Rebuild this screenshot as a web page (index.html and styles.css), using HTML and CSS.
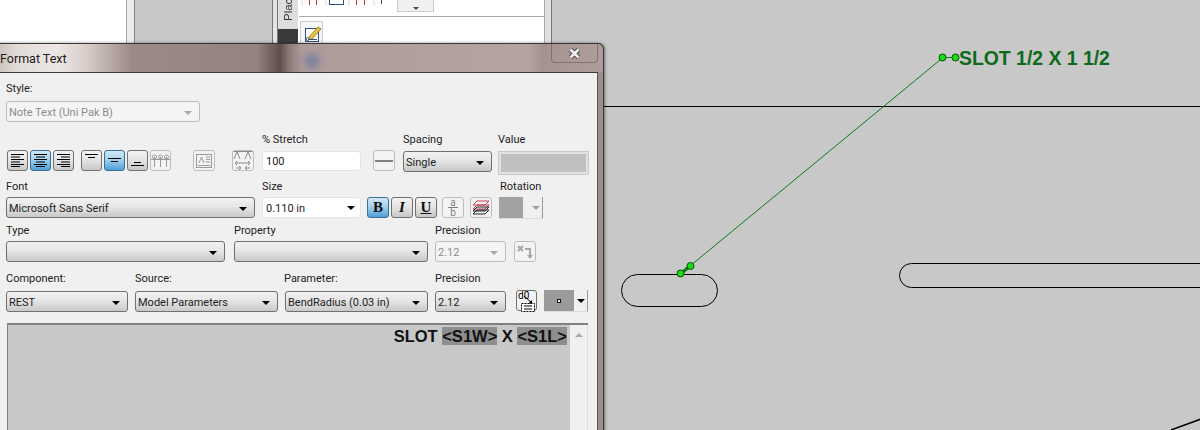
FILE: index.html
```html
<!DOCTYPE html>
<html>
<head>
    <meta charset="utf-8">
    <title>Format Text</title>
    <link rel="stylesheet" href="styles.css">
</head>
<body>
    <div class="canvas">
        <!-- windows behind the dialog -->
        <div class="back_panel"></div>

        <div class="place_window">
            <div class="place_tab">
                <span class="place_tab_text">Plac</span>
                <div class="place_tab_dark"></div>
            </div>
            <div class="place_body">
                <div class="place_icons">
                    <svg class="place_icons_svg" width="96" height="6" viewBox="0 0 96 6">
                        <path d="M10.500 0v5M17.500 0v5M57.500 0v5M65.500 0v5" stroke="#c0392b" fill="none"/>
                        <path d="M30 4.500h15M30.500 0v5M44.500 0v5M82.500 0v4" stroke="#2f4f80" fill="none"/>
                        <path d="M3 0v6M27 0v6M50 0v6M75 0v6" stroke="#d8d8d8" fill="none"/>
                    </svg>
                    <div class="place_more"><i class="tiny_arrow"></i></div>
                </div>
                <div class="place_pencil">
                    <svg width="18" height="18" viewBox="0 0 18 18">
                        <rect x="1.500" y="4.500" width="13" height="13" fill="#fff" stroke="#2f4f80"/>
                        <path d="M5 13l9-10 3 2-9 10-3.500 1z" fill="#f0c040" stroke="#8a6a10" stroke-width=".8"/>
                        <path d="M3 15.500h10" stroke="#2f4f80"/>
                        <circle cx="3.500" cy="15" r="1.500" fill="#fff" stroke="#2f4f80"/>
                    </svg>
                </div>
            </div>
        </div>

        <!-- the drawing on the sheet -->
        <svg class="sheet" width="1200" height="430" viewBox="0 0 1200 430">
            <path d="M600 106.500H1200" stroke="#000" fill="none"/>
            <rect x="621.500" y="274.500" width="96" height="32" rx="16" fill="none" stroke="#000"/>
            <rect x="899.500" y="263.500" width="340" height="24" rx="12" fill="none" stroke="#000"/>
            <path d="M1171 430l30-11" stroke="#000" stroke-width="1.500" fill="none"/>
            <path d="M943 57.500L690 266M943 57.500H956" stroke="#0d7a1c" fill="none"/>
            <path d="M681 273.500L690 266" stroke="#0d7a1c" stroke-width="3" fill="none"/>
            <g fill="#14e014" stroke="#0a4d0a">
                <circle cx="942.500" cy="57.500" r="3.500"/>
                <circle cx="955.500" cy="57.500" r="3.500"/>
                <circle cx="690.500" cy="266" r="3.500"/>
                <circle cx="680.500" cy="273.500" r="3.500"/>
            </g>
        </svg>
        <div class="sheet_note">SLOT 1/2 X 1 1/2</div>

        <!-- dialog -->
        <div class="dialog">
            <div class="title_bar">
                <span class="title_text">Format Text</span>
                <div class="title_blue"></div>
                <div class="close_btn">
                    <svg width="13" height="11" viewBox="0 0 13 11">
                        <path d="M2.500 1.500l8 8M10.500 1.500l-8 8" stroke="#4a4a4a" stroke-width="4.600" fill="none"/>
                        <path d="M2.500 1.500l8 8M10.500 1.500l-8 8" stroke="#f4f4f4" stroke-width="2.600" fill="none"/>
                    </svg>
                </div>
            </div>
            <div class="dialog_body">
                <div class="label_row row_style"><span>Style:</span></div>
                <div class="style_row">
                    <div class="combo disabled"><span>Note Text (Uni Pak B)</span><i class="arrow"></i></div>
                </div>

                <div class="label_row row_stretch">
                    <span>% Stretch</span><span>Spacing</span><span>Value</span>
                </div>
                <div class="tool_row">
                    <div class="btn_group">
                        <div class="tbtn"><svg width="15" height="13" viewBox="0 0 15 13"><path d="M1 .5h13M1 3h9M1 5.500h13M1 8h9M1 10.500h13M1 12.500h9" stroke="#000" fill="none"/></svg></div>
                        <div class="tbtn active"><svg width="15" height="13" viewBox="0 0 15 13"><path d="M1 .5h13M3 3h9M1 5.500h13M3 8h9M1 10.500h13M3 12.500h9" stroke="#000" fill="none"/></svg></div>
                        <div class="tbtn"><svg width="15" height="13" viewBox="0 0 15 13"><path d="M1 .5h13M5 3h9M1 5.500h13M5 8h9M1 10.500h13M5 12.500h9" stroke="#000" fill="none"/></svg></div>
                    </div>
                    <div class="btn_group vert_group">
                        <div class="tbtn align_top"><svg width="13" height="5" viewBox="0 0 13 5"><path d="M0 .5h13M3 3.500h7" stroke="#000" fill="none"/></svg></div>
                        <div class="tbtn active"><svg width="13" height="5" viewBox="0 0 13 5"><path d="M0 .5h13M3 3.500h7" stroke="#000" fill="none"/></svg></div>
                        <div class="tbtn align_bottom"><svg width="13" height="5" viewBox="0 0 13 5"><path d="M3 .5h7M0 3.500h13" stroke="#000" fill="none"/></svg></div>
                        <div class="tbtn off"><svg width="19" height="14" viewBox="0 0 19 14"><path d="M0 5.500h19M3.500 3v10M9.500 3v10M15.500 3v10" stroke="#999" fill="none"/><circle cx="3.500" cy="3" r="2" fill="none" stroke="#999"/><circle cx="9.500" cy="3" r="2" fill="none" stroke="#999"/><circle cx="15.500" cy="3" r="2" fill="none" stroke="#999"/></svg></div>
                    </div>
                    <div class="tbtn off box_one"><svg width="16" height="14" viewBox="0 0 16 14"><rect x=".5" y=".5" width="15" height="13" fill="none" stroke="#999"/><path d="M3 9l2.500-6L8 9M2 11.500h12M10 3h4M10 5.500h4M10 8h4" stroke="#999" fill="none"/></svg></div>
                    <div class="tbtn off box_two"><svg width="20" height="19" viewBox="0 0 20 19"><path d="M1 8l3-7 3 7M12 8l3-7 3 7M2 12h15M2 12l2-2M2 12l2 2M17 12l-2-2M17 12l-2 2M3 17h5M8 17l-2-2M8 17l-2 2M17 17h-5M12 17l2-2M12 17l2 2M.5.500h19" stroke="#8c8c8c" fill="none"/></svg></div>
                    <div class="text_input stretch_input">100</div>
                    <div class="tbtn off line_btn"><i class="line_mark"></i></div>
                    <div class="combo spacing_combo"><span>Single</span><i class="arrow"></i></div>
                    <div class="value_box"></div>
                </div>

                <div class="label_row row_font">
                    <span>Font</span><span>Size</span><span>Rotation</span>
                </div>
                <div class="font_row">
                    <div class="combo font_combo"><span>Microsoft Sans Serif</span><i class="arrow"></i></div>
                    <div class="text_input size_input"><span>0.110 in</span><i class="arrow"></i></div>
                    <div class="style_btns">
                        <div class="tbtn active letter letter_b">B</div>
                        <div class="tbtn letter letter_i">I</div>
                        <div class="tbtn letter letter_u">U</div>
                    </div>
                    <div class="tbtn off frac_btn">
                        <span>a</span><span class="frac_low">b</span>
                    </div>
                    <div class="tbtn off layer_btn">
                        <svg width="18" height="15" viewBox="0 0 18 15"><path d="M5 1h12l-4 4H1zM5 5h12l-4 4H1z" fill="none" stroke="#c0404a"/><path d="M5 7h12l-4 4H1zM5 10h12l-4 4H1z" fill="none" stroke="#222"/></svg>
                    </div>
                    <div class="swatch_combo rotation_combo"><div class="swatch"></div><i class="arrow grey"></i></div>
                </div>

                <div class="label_row row_type">
                    <span>Type</span><span>Property</span><span>Precision</span>
                </div>
                <div class="type_row">
                    <div class="combo"><span></span><i class="arrow"></i></div>
                    <div class="combo"><span></span><i class="arrow"></i></div>
                    <div class="combo disabled"><span>2.12</span><i class="arrow"></i></div>
                    <div class="tbtn off xy_btn">
                        <svg width="18" height="16" viewBox="0 0 18 16"><path d="M2 2l5 5M7 2l-5 5M9 5h5v7" stroke="#a8a8a8" stroke-width="2" fill="none"/><path d="M11 11h6l-3 4z" fill="#a8a8a8"/></svg>
                    </div>
                </div>

                <div class="label_row row_component">
                    <span>Component:</span><span>Source:</span><span>Parameter:</span><span>Precision</span>
                </div>
                <div class="component_row">
                    <div class="combo"><span>REST</span><i class="arrow"></i></div>
                    <div class="combo"><span>Model Parameters</span><i class="arrow"></i></div>
                    <div class="combo"><span>BendRadius (0.03 in)</span><i class="arrow"></i></div>
                    <div class="combo"><span>2.12</span><i class="arrow"></i></div>
                    <div class="tbtn d0_btn">
                        <span class="d0_text">d0</span>
                        <svg class="d0_svg" width="20" height="20" viewBox="0 0 20 20"><path d="M6 4l8 7" stroke="#000" fill="none"/><path d="M14 8v5h-5z" fill="#000"/><rect x="3.500" y="11.500" width="13" height="8" fill="#fff" stroke="#000" stroke-dasharray="2 1"/><path d="M6 14h8M6 17h8" stroke="#000" fill="none"/></svg>
                    </div>
                    <div class="swatch_combo dot_combo"><div class="swatch"><i class="dot"></i></div><i class="arrow"></i></div>
                </div>

                <div class="editor">
                    <div class="editor_text">
                        SLOT <span class="param">&lt;S1W&gt;</span> X <span class="param">&lt;S1L&gt;</span>
                    </div>
                    <div class="scrollbar"><i class="scroll_up"></i></div>
                </div>
            </div>
        </div>
    </div>
</body>
</html>
```

FILE: styles.css
```css
html, body {
    margin: 0;
    height: 100%;
    overflow: hidden;
}

body {
    font-family: Roboto, 'Liberation Sans', sans-serif;
    font-size: 11px;
    color: #222;
    background: #c8c8c8;
}

.canvas {
    position: relative;
    width: 1200px;
    height: 430px;
    overflow: hidden;
}

/* windows behind */

.back_panel {
    position: absolute;
    left: 0;
    top: 0;
    width: 126px;
    height: 43px;
    background: #fff;
    border-right: 1px solid #a8a8a8;
    box-shadow: 7px 0 0 #ececec, 8px 0 0 #858585;
}

.place_window {
    position: absolute;
    left: 272px;
    top: 0;
    width: 267px;
    height: 44px;
    display: flex;
    border-left: 1px solid #777;
    border-right: 1px solid #aaa;
    box-shadow: 6px 0 0 #e4e0e0, 7px 0 0 #777;
    padding-left: 4px;
    background: #e6e2e2;
}

.place_tab {
    width: 20px;
    border-left: 1px solid #777;
    background: #dedede;
    display: flex;
    flex-direction: column;
    align-items: center;
    overflow: hidden;
}

.place_tab_text {
    writing-mode: vertical-rl;
    transform: rotate(180deg);
    height: 29px;
    box-sizing: border-box;
    padding-top: 8px;
    font-family: 'Liberation Sans', sans-serif;
    font-size: 11.5px;
    color: #333;
    white-space: nowrap;
    display: block;
    text-align: left;
}

.place_tab_dark {
    width: 100%;
    height: 15px;
    background: #3a3a3a;
}

.place_body {
    flex: 1;
    background: #fff;
    padding-left: 1px;
}

.place_icons {
    height: 16px;
    border-bottom: 1px solid #aaa;
    display: flex;
}

.place_icons_svg {
    display: block;
}

.place_more {
    width: 37px;
    height: 12px;
    margin-left: 2px;
    background: #f0f0f0;
    border: 1px solid #ccc;
    border-top: 0;
    display: flex;
    justify-content: center;
    align-items: flex-end;
    padding-bottom: 1px;
    box-sizing: border-box;
}

.tiny_arrow {
    border-left: 3px solid transparent;
    border-right: 3px solid transparent;
    border-top: 3px solid #444;
}

.place_pencil {
    width: 23px;
    height: 24px;
    margin-top: 4px;
    margin-left: 1px;
    box-sizing: border-box;
    border: 1px solid #ccc;
    background: #f6f6f6;
    padding: 2px 0 0 3px;
}

.place_pencil svg {
    display: block;
}

/* sheet */

.sheet {
    position: absolute;
    left: 0;
    top: 0;
}

.sheet_note {
    position: absolute;
    left: 959px;
    top: 47px;
    font-family: 'Liberation Sans', Arial, sans-serif;
    font-size: 19.4px;
    line-height: 22px;
    font-weight: 700;
    color: #0d6a1a;
    white-space: nowrap;
}

/* dialog */

.dialog {
    position: absolute;
    left: -3px;
    top: 43px;
    width: 607px;
    height: 400px;
    box-sizing: border-box;
    border: 1px solid #3c3434;
    border-left: 0;
    border-radius: 0 6px 0 0;
    background: #9c8e8c;
    box-shadow: 1px 0 3px rgba(0, 0, 0, 0.45);
}

.title_bar {
    position: relative;
    height: 28px;
    background: linear-gradient(90deg, #cbbfbb 0, #e2dcd9 20px, #ece7e5 60px, #d8ccc9 90px, #9c8a88 135px, #958381 260px, #5f4e4e 283px, #8a7876 292px, #ad9c99 305px, #b5a5a2 530px, #a69391 545px, #ad9d9a 600px);
    border-radius: 0 6px 0 0;
}

.title_text {
    position: absolute;
    left: 3px;
    top: 7px;
    font-size: 12.5px;
    line-height: 15px;
    color: #1c1c1c;
}

.title_blue {
    position: absolute;
    left: 308px;
    top: 10px;
    width: 14px;
    height: 14px;
    border-radius: 7px;
    background: #6f7ba0;
    filter: blur(4px);
}

.close_btn {
    position: absolute;
    left: 554px;
    top: 0;
    width: 47px;
    height: 19px;
    box-sizing: border-box;
    border: 1px solid #83736f;
    border-top: 0;
    border-radius: 0 0 4px 4px;
    display: flex;
    align-items: center;
    justify-content: center;
}

.close_btn svg {
    overflow: visible;
}

.dialog_body {
    width: 601px;
    height: 370px;
    box-sizing: border-box;
    background: #f0f0f0;
    border-top: 1px solid #3f3636;
    border-right: 1px solid #5d5050;
    padding-left: 9px;
}

.label_row {
    display: grid;
    height: 13px;
    line-height: 13px;
    white-space: nowrap;
}

.row_style {
    padding-top: 9px;
}

.row_stretch {
    margin-top: 11px;
    margin-left: 256px;
    grid-template-columns: 141px 95px 1fr;
}

.row_font {
    margin-top: 6px;
    grid-template-columns: 256px 238px 1fr;
}

.row_type {
    margin-top: 5px;
    grid-template-columns: 228px 201px 1fr;
}

.row_component {
    margin-top: 10px;
    grid-template-columns: 129px 149px 151px 1fr;
}

/* controls */

.combo,
.text_input {
    height: 21px;
    box-sizing: border-box;
    border: 1px solid #707070;
    border-radius: 3px;
    display: flex;
    align-items: center;
    justify-content: space-between;
    padding: 2px 4px 0 2px;
    white-space: nowrap;
    overflow: hidden;
}

.combo {
    background: linear-gradient(#f2f2f2 0, #e6e6e6 45%, #c9c9c9 100%);
}

.combo.disabled {
    background: #f4f4f4;
    border-color: #bcbcbc;
    color: #8c8c8c;
}

.combo.disabled .arrow {
    border-top-color: #a8a8a8;
}

.arrow {
    flex: none;
    margin-right: 3px;
    border-left: 4px solid transparent;
    border-right: 4px solid transparent;
    border-top: 4px solid #000;
}

.arrow.grey {
    border-top-color: #a0a0a0;
}

.text_input {
    background: #fff;
    border: 1px solid #e4e4e4;
    padding: 1px 2px 0 3px;
}

.tbtn {
    width: 21px;
    height: 21px;
    box-sizing: border-box;
    border: 1px solid #707070;
    border-radius: 3px;
    background: linear-gradient(#f4f4f4 0, #e4e4e4 45%, #c8c8c8 100%);
    display: flex;
    align-items: center;
    justify-content: center;
    flex: none;
}

.tbtn.active {
    border-color: #3c6f92;
    background: linear-gradient(#d2e8f6 0, #a4d2ee 45%, #4f9fd6 100%);
}

.tbtn.off {
    background: #f3f3f3;
    border-color: #bdbdbd;
}

.style_row {
    margin-top: 6px;
    width: 194px;
}

.tool_row {
    display: flex;
    margin-top: 4px;
    align-items: flex-start;
}

.btn_group {
    display: flex;
    gap: 2px;
    margin-left: 1px;
}

.vert_group {
    margin-left: 7px;
}

.align_top {
    align-items: flex-start;
    padding-top: 3px;
}

.align_bottom {
    align-items: flex-end;
    padding-bottom: 3px;
}

.box_one {
    margin-left: 22px;
    width: 22px;
}

.box_two {
    margin-left: 17px;
    width: 22px;
    border-color: #c8c8c8;
}

.stretch_input {
    width: 99px;
    margin-left: 8px;
    margin-top: 1px;
    height: 20px;
}

.line_btn {
    width: 22px;
    margin-left: 12px;
}

.line_mark {
    width: 18px;
    height: 2px;
    background: #808080;
}

.spacing_combo {
    width: 89px;
    margin-left: 8px;
    margin-top: 1px;
}

.value_box {
    width: 89px;
    height: 22px;
    box-sizing: border-box;
    margin-left: 7px;
    margin-top: 2px;
    background: #c0c0c0;
    border: 2px solid #e2e2e2;
    outline: 1px solid #c8c8c8;
}

.font_row {
    display: flex;
    margin-top: 4px;
    align-items: flex-start;
}

.font_combo {
    width: 249px;
}

.size_input {
    width: 99px;
    margin-left: 7px;
}

.style_btns {
    display: flex;
    gap: 2px;
    margin-left: 6px;
}

.letter {
    width: 22px;
    height: 21px;
    font-family: 'Liberation Serif', 'Times New Roman', serif;
    font-size: 15px;
    font-weight: 700;
    color: #111;
}

.letter_i {
    font-style: italic;
}

.letter_u {
    text-decoration: underline;
}

.frac_btn {
    width: 22px;
    margin-left: 5px;
    flex-direction: column;
    font-size: 10px;
    line-height: 9px;
    color: #808080;
}

.frac_low {
    border-top: 1px solid #808080;
    width: 10px;
    text-align: center;
}

.layer_btn {
    width: 22px;
    margin-left: 6px;
    background: #f0f0f0;
    border-color: #d0d0d0;
}

.swatch_combo {
    width: 44px;
    height: 22px;
    display: flex;
    align-items: center;
    justify-content: space-between;
    box-sizing: border-box;
    background: #f0f0f0;
    border-right: 1px solid #9a9a9a;
    border-bottom: 1px solid #dcdcdc;
}

.swatch_combo .arrow {
    margin-right: 2px;
}

.swatch {
    width: 24px;
    height: 100%;
    background: #a2a2a2;
}

.rotation_combo {
    margin-left: 7px;
}

.type_row {
    display: grid;
    grid-template-columns: 219px 194px 72px 22px;
    column-gap: 9px;
    margin-top: 4px;
}

.type_row .combo:nth-child(3) {
    margin-left: -2px;
    width: 71px;
}

.xy_btn {
    width: 22px;
    margin-left: -4px;
}

.component_row {
    display: flex;
    margin-top: 6px;
    align-items: flex-start;
}

.component_row .combo {
    flex: none;
}

.component_row .combo:nth-child(1) {
    width: 122px;
}

.component_row .combo:nth-child(2) {
    width: 143px;
    margin-left: 7px;
}

.component_row .combo:nth-child(3) {
    width: 143px;
    margin-left: 7px;
}

.component_row .combo:nth-child(4) {
    width: 71px;
    margin-left: 7px;
}

.d0_btn {
    position: relative;
    width: 21px;
    margin-left: 10px;
    margin-top: -1px;
    background: #f2f2f2;
    justify-content: flex-start;
    align-items: flex-start;
}

.d0_text {
    font-size: 10px;
    line-height: 10px;
    color: #000;
    padding-left: 1px;
}

.d0_svg {
    position: absolute;
    left: 1px;
    top: 1px;
}

.dot_combo {
    width: 44px;
    height: 22px;
    margin-left: 7px;
    margin-top: -1px;
}

.dot_combo .swatch {
    width: 30px;
    background: #9a9a9a;
    display: flex;
    align-items: center;
    justify-content: center;
}

.dot {
    width: 4px;
    height: 4px;
    box-sizing: border-box;
    border: 1px solid #111;
    background: #fff;
}

.editor {
    display: flex;
    height: 107px;
    width: 581px;
    margin-top: 11px;
    box-sizing: border-box;
    margin-left: 1px;
    background: #c8c8c8;
    border-top: 2px solid #808080;
    border-left: 1px solid #808080;
}

.editor_text {
    flex: 1;
    text-align: right;
    padding: 2px 3px 0 0;
    font-family: 'Liberation Sans', Arial, sans-serif;
    font-size: 16.5px;
    line-height: 18px;
    font-weight: 700;
    color: #111;
}

.param {
    background: #8e8e8e;
}

.scrollbar {
    width: 17px;
    background: #f0f0f0;
    border-right: 1px solid #dedede;
    display: flex;
    justify-content: center;
    padding-top: 8px;
}

.scroll_up {
    width: 0;
    height: 0;
    border-left: 4px solid transparent;
    border-right: 4px solid transparent;
    border-bottom: 4px solid #a8a8a8;
}
```
